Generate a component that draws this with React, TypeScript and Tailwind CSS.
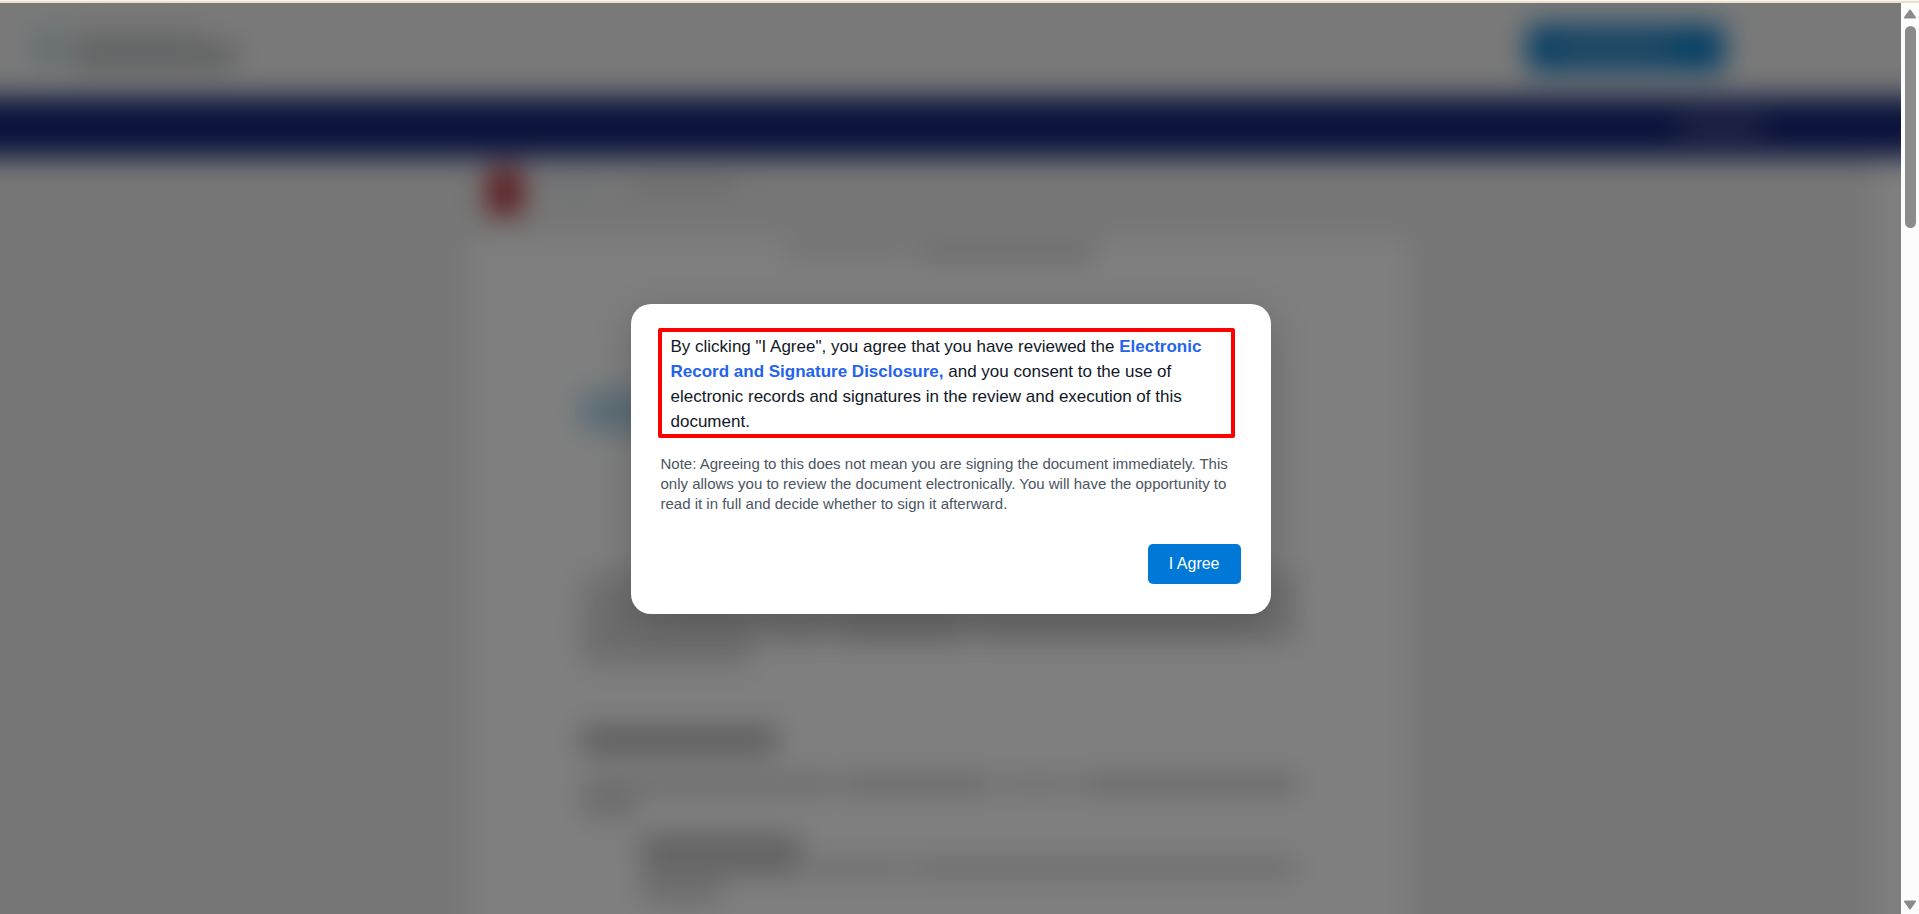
import React from "react";

function Line({ className }: { className: string }) {
  return <div className={className} />;
}

function PageBehind() {
  return (
    <div
      aria-hidden="true"
      className="absolute -inset-10 flex flex-col overflow-hidden bg-white blur-[14px]"
    >
      <div className="flex h-[134px] shrink-0 items-center justify-between bg-[#f3f3f3] pt-9 pr-[216px] pl-[72px]">
        <div className="flex items-center gap-2">
          <div className="h-10 w-8 rounded-full bg-[#c4dee4]" />
          <div className="flex flex-col gap-1">
            <div className="h-3 w-32 bg-[#d4d5d6]" />
            <div className="h-6 w-[164px] bg-[#bcbec0]" />
          </div>
        </div>
        <div className="flex h-12 w-[198px] items-center rounded-md bg-[#1080cc] pl-8">
          <div className="h-4 w-28 bg-[#5795c0]" />
        </div>
      </div>
      <div className="flex h-[60px] shrink-0 items-center justify-end bg-[#162679] pr-[178px]">
        <div className="h-4 w-[84px] bg-[#545c8c]" />
      </div>
      <div className="mr-16 ml-10 flex min-h-0 flex-1 justify-center bg-[#eeeeee] shadow-[-40px_0_0_#eeeeee]">
        <div className="flex w-[936px] flex-col">
          <div className="flex h-[82px] items-start gap-6 px-4 pt-3">
            <div className="h-[46px] w-9 rounded-lg bg-[#b8343c]" />
            <div className="mt-2 h-4 w-14 bg-[#dde2e4]" />
            <div className="mt-2 h-4 w-28 bg-[#d8d8d8]" />
          </div>
          <div className="flex-1 bg-white px-[110px] pt-1">
            <div className="flex justify-center gap-2">
              <Line className="h-5 w-32 bg-[#e8e8e8]" />
              <Line className="h-5 w-44 bg-[#d8d8d8]" />
            </div>
            <Line className="mt-32 h-10 w-44 bg-[#b4d8ec]" />
            <div className="mt-36 flex flex-col gap-2">
              <Line className="h-4 w-full bg-[#d4d4d4]" />
              <Line className="h-4 w-full bg-[#cccccc]" />
              <div className="flex gap-2">
                <Line className="h-4 w-44 bg-[#c4c4c4]" />
                <Line className="h-4 w-16 bg-[#cccccc]" />
                <Line className="h-4 w-32 bg-[#c0c0c0]" />
                <Line className="h-4 flex-1 bg-[#cccccc]" />
              </div>
              <Line className="h-4 w-[170px] bg-[#cecece]" />
            </div>
            <Line className="mt-8 h-px w-full bg-[#e0e0e0]" />
            <Line className="mt-8 h-6 w-[196px] bg-[#b0b0b0]" />
            <div className="mt-6 flex gap-2">
              <Line className="h-4 w-64 bg-[#d0d0d0]" />
              <Line className="h-4 w-36 bg-[#c6c6c6]" />
              <Line className="h-4 w-20 bg-[#dadada]" />
              <Line className="h-4 flex-1 bg-[#c6c6c6]" />
            </div>
            <Line className="mt-2 h-4 w-14 bg-[#cccccc]" />
            <div className="pt-5 pl-[60px]">
              <Line className="h-5 w-[160px] bg-[#b8b8b8]" />
              <div className="mt-1 flex gap-2">
                <Line className="h-4 w-40 bg-[#c2c2c2]" />
                <Line className="h-4 w-24 bg-[#d8d8d8]" />
                <Line className="h-4 flex-1 bg-[#d0d0d0]" />
              </div>
              <Line className="mt-2 h-4 w-20 bg-[#cacaca]" />
            </div>
          </div>
        </div>
      </div>
    </div>
  );
}

function ConsentDialog() {
  return (
    <div
      role="dialog"
      aria-modal="true"
      aria-describedby="consent"
      className="w-[640px] max-w-full rounded-[20px] bg-white p-[30px] shadow-[0_10px_40px_rgba(0,0,0,0.2)]"
    >
      <div className="relative px-[10px]">
        <p id="consent" className="text-[17px] leading-[25px] text-[#111827]">
          By clicking "I Agree", you agree that you have reviewed the{" "}
          <a href="#disclosure" className="font-bold text-[#2563eb]">
            Electronic Record and Signature Disclosure,
          </a>{" "}
          and you consent to the use of electronic records and signatures in the review and
          execution of this document.
        </p>
        <div className="pointer-events-none absolute -top-[6px] right-[6px] -bottom-1 -left-[3px] rounded-[2px] border-4 border-[#ff0000]" />
      </div>
      <p className="mt-5 text-[15px] leading-5 text-[#4b5563]">
        Note: Agreeing to this does not mean you are signing the document immediately. This only
        allows you to review the document electronically. You will have the opportunity to read it
        in full and decide whether to sign it afterward.
      </p>
      <div className="mt-[30px] flex justify-end">
        <button type="button" className="h-10 rounded-[5px] bg-[#0078d7] px-[21px] text-[16px] text-white">
          I Agree
        </button>
      </div>
    </div>
  );
}

function Scrollbar() {
  return (
    <div aria-hidden="true" className="flex w-[18px] shrink-0 flex-col items-center bg-[#fcfcfc] pt-1.5 pb-1">
      <svg width="14" height="10" viewBox="0 0 14 10" className="shrink-0">
        <path d="M7 1.5 12 8.5H2Z" fill="#8b8b8b" stroke="#8b8b8b" strokeWidth="2" strokeLinejoin="round" />
      </svg>
      <div className="flex w-[11px] flex-1 flex-col pt-[7px]">
        <div className="h-[202px] rounded-full bg-[#8b8b8b]" />
      </div>
      <svg width="14" height="10" viewBox="0 0 14 10" className="shrink-0">
        <path d="M7 8.5 12 1.5H2Z" fill="#8b8b8b" stroke="#8b8b8b" strokeWidth="2" strokeLinejoin="round" />
      </svg>
    </div>
  );
}

export default function App() {
  return (
    <div className="flex h-screen flex-col overflow-hidden font-['Liberation_Sans',Arial,sans-serif]">
      <div className="h-[3px] shrink-0 border-t border-[#faf6ee] bg-[#ebe0cb]" />
      <div className="flex min-h-0 flex-1">
        <main className="relative min-w-0 flex-1 overflow-hidden">
          <PageBehind />
          <div className="absolute inset-0 flex items-center justify-center bg-black/50">
            <ConsentDialog />
          </div>
        </main>
        <Scrollbar />
      </div>
    </div>
  );
}
